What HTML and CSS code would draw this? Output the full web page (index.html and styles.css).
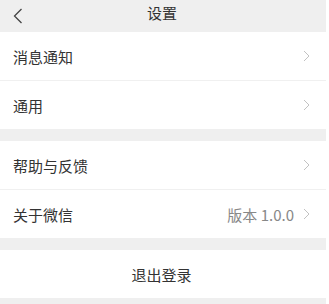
FILE: index.html
```html
<!doctype html>
<html lang="zh-CN">
  <head>
    <meta charset="UTF-8" />
    <meta name="viewport" content="width=device-width, initial-scale=1.0" />
    <title>设置</title>
    <link rel="stylesheet" href="styles.css">
  </head>
  <body>
    <div class="page">
      <!-- Top bar -->
      <div class="nav-bar">
        <span class="back">
          <svg width="10" height="16" viewBox="0 0 10 16"><path d="M8.5 1 L1.5 8 L8.5 15" fill="none" stroke="#444" stroke-width="1.3"/></svg>
        </span>
        <span class="nav-title">设置</span>
      </div>

      <div class="group">
        <div class="cell">
          <span class="cell-label">消息通知</span>
          <span class="arrow"><svg width="7" height="12" viewBox="0 0 7 12"><path d="M1 1 L6 6 L1 11" fill="none" stroke="#c2c2c2" stroke-width="1"/></svg></span>
        </div>
        <div class="cell">
          <span class="cell-label">通用</span>
          <span class="arrow"><svg width="7" height="12" viewBox="0 0 7 12"><path d="M1 1 L6 6 L1 11" fill="none" stroke="#c2c2c2" stroke-width="1"/></svg></span>
        </div>
      </div>

      <div class="group">
        <div class="cell">
          <span class="cell-label">帮助与反馈</span>
          <span class="arrow"><svg width="7" height="12" viewBox="0 0 7 12"><path d="M1 1 L6 6 L1 11" fill="none" stroke="#c2c2c2" stroke-width="1"/></svg></span>
        </div>
        <div class="cell">
          <span class="cell-label">关于微信</span>
          <span class="cell-value">版本 1.0.0</span>
          <span class="arrow"><svg width="7" height="12" viewBox="0 0 7 12"><path d="M1 1 L6 6 L1 11" fill="none" stroke="#c2c2c2" stroke-width="1"/></svg></span>
        </div>
      </div>

      <div class="group">
        <div class="cell logout">退出登录</div>
      </div>
    </div>
  </body>
</html>
```

FILE: styles.css
```css
body {
  margin: 0;
  background: #ffffff;
  font-family: "Noto Sans CJK SC", "Noto Sans", sans-serif;
  color: #333333;
}

.page {
  width: 326px;
  height: 304px;
  background: #efefef;
  overflow: hidden;
}

/* Top bar */
.nav-bar {
  height: 30px;
  padding-top: 2px;
  display: flex;
  align-items: flex-start;
  justify-content: center;
  position: relative;
}

.back {
  position: absolute;
  left: 13px;
  top: 5px;
}

.nav-title {
  font-size: 15px;
  color: #333;
  margin-left: -2px;
}

/* List groups */
.group {
  background: #ffffff;
  margin-bottom: 12px;
}

.cell {
  height: 48px;
  display: flex;
  align-items: center;
  padding: 0 16px 0 13px;
  font-size: 15px;
  border-bottom: 1px solid #f0f0f0;
}

.cell:last-child {
  border-bottom: none;
}

.cell-label {
  flex: 1;
}

.cell-value {
  color: #888888;
  margin-right: 9px;
}

.arrow {
  display: flex;
}

.logout {
  justify-content: center;
  padding: 0;
  margin-left: -3px;
}
```
